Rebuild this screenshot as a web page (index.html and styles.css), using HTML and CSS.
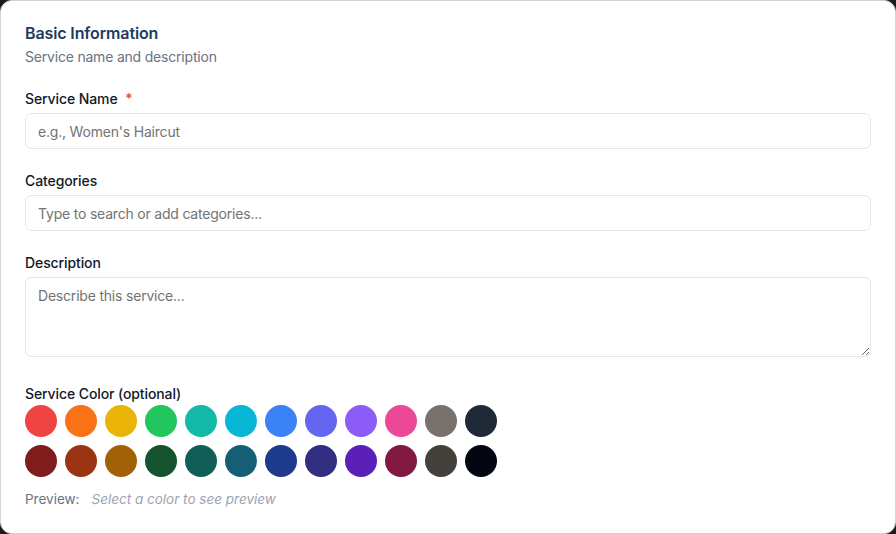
FILE: index.html
```html
<!DOCTYPE html>
<html lang="en">
<head>
<meta charset="utf-8">
<title>Basic Information</title>
<link rel="stylesheet" href="styles.css">
</head>
<body>
<div class="card">
  <div class="header">
    <h2 class="title">Basic Information</h2>
    <p class="subtitle">Service name and description</p>
  </div>

  <div class="field">
    <label class="label">Service Name <span class="req">*</span></label>
    <input class="input" type="text" placeholder="e.g., Women's Haircut">
  </div>

  <div class="field">
    <label class="label">Categories</label>
    <input class="input" type="text" placeholder="Type to search or add categories...">
  </div>

  <div class="field field-last">
    <label class="label">Description</label>
    <textarea class="textarea" placeholder="Describe this service..."></textarea>
  </div>

  <div class="colors">
    <label class="label label-tight">Service Color (optional)</label>
    <div class="swatches">
      <span class="swatch" style="background:#ef4444"></span>
      <span class="swatch" style="background:#f97316"></span>
      <span class="swatch" style="background:#eab308"></span>
      <span class="swatch" style="background:#22c55e"></span>
      <span class="swatch" style="background:#14b8a6"></span>
      <span class="swatch" style="background:#06b6d4"></span>
      <span class="swatch" style="background:#3b82f6"></span>
      <span class="swatch" style="background:#6366f1"></span>
      <span class="swatch" style="background:#8b5cf6"></span>
      <span class="swatch" style="background:#ec4899"></span>
      <span class="swatch" style="background:#78716c"></span>
      <span class="swatch" style="background:#1f2937"></span>
      <span class="swatch" style="background:#7f1d1d"></span>
      <span class="swatch" style="background:#9a3412"></span>
      <span class="swatch" style="background:#a16207"></span>
      <span class="swatch" style="background:#14532d"></span>
      <span class="swatch" style="background:#115e59"></span>
      <span class="swatch" style="background:#155e75"></span>
      <span class="swatch" style="background:#1e3a8a"></span>
      <span class="swatch" style="background:#312e81"></span>
      <span class="swatch" style="background:#5b21b6"></span>
      <span class="swatch" style="background:#831843"></span>
      <span class="swatch" style="background:#44403c"></span>
      <span class="swatch" style="background:#030712"></span>
    </div>
    <div class="preview">
      <span class="preview-label">Preview:</span>
      <span class="preview-empty">Select a color to see preview</span>
    </div>
  </div>
</div>
</body>
</html>
```

FILE: styles.css
```css
* { box-sizing: border-box; }

html, body {
  margin: 0;
  padding: 0;
  height: 100%;
}

body {
  background: #1c1c1c;
  font-family: Inter, "Noto Sans", "Liberation Sans", sans-serif;
  color: #111827;
}

.card {
  width: 896px;
  height: 534px;
  background: #ffffff;
  border: 1px solid #d4d4d8;
  border-radius: 12px;
  padding: 20px 24px 0 24px;
  overflow: hidden;
}

.header {
  margin-bottom: 22px;
}

.title {
  margin: 0;
  font-size: 16px;
  line-height: 24px;
  font-weight: 600;
  color: #1e3a5f;
  letter-spacing: -0.12px;
}

.subtitle {
  margin: 2px 0 0 0;
  font-size: 14px;
  line-height: 20px;
  color: #6b7280;
  letter-spacing: -0.2px;
}

.field {
  display: flex;
  flex-direction: column;
  gap: 4px;
  margin-bottom: 22px;
}

.field-last {
  margin-bottom: 27px;
}

.label {
  font-size: 14px;
  line-height: 20px;
  font-weight: 500;
  color: #111827;
  letter-spacing: -0.1px;
}

.req {
  color: #ef4444;
  margin-left: 4px;
}

.input,
.textarea {
  display: block;
  width: 100%;
  border: 1px solid #e5e7eb;
  border-radius: 6px;
  background: #ffffff;
  font-family: inherit;
  font-size: 14px;
  color: #111827;
  padding: 0 12px;
  outline: none;
  letter-spacing: -0.2px;
}

.input {
  height: 36px;
}

.textarea {
  height: 80px;
  padding: 8px 12px;
  line-height: 20px;
  resize: vertical;
}

.input::placeholder,
.textarea::placeholder {
  color: #737373;
}

.colors {
  display: flex;
  flex-direction: column;
}

.label-tight {
  margin-bottom: 1px;
}

.swatches {
  display: grid;
  grid-template-columns: repeat(12, 32px);
  gap: 8px;
}

.swatch {
  display: block;
  width: 32px;
  height: 32px;
  border-radius: 50%;
}

.preview {
  display: flex;
  align-items: center;
  gap: 12px;
  margin-top: 12px;
  font-size: 13.5px;
  line-height: 20px;
}

.preview-label {
  color: #6b7280;
}

.preview-empty {
  color: #9ca3af;
  font-style: italic;
}
```
